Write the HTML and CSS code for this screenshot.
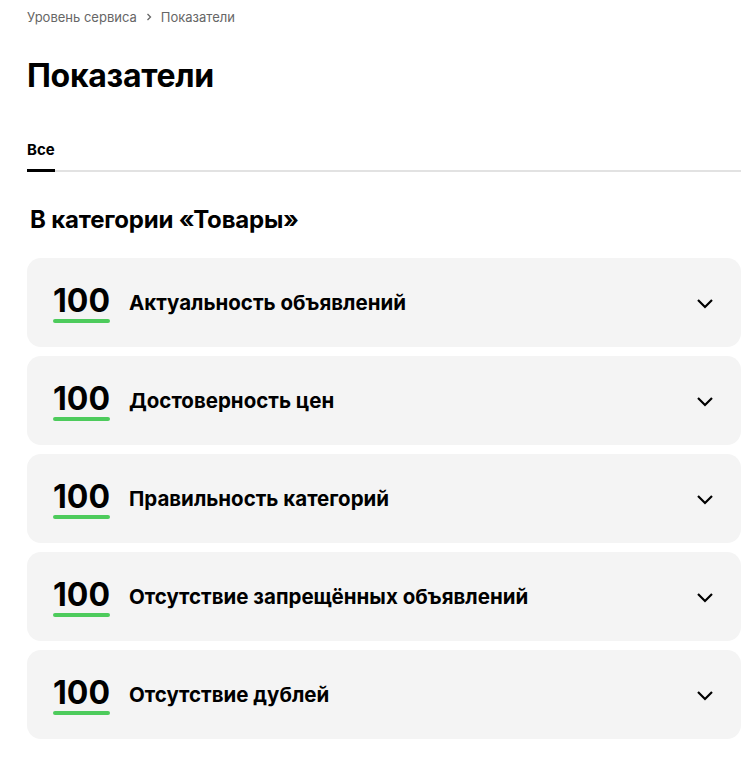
FILE: index.html
```html
<!DOCTYPE html>
<html lang="ru">
<head>
    <meta charset="UTF-8">
    <meta name="viewport" content="width=device-width, initial-scale=1.0">
    <title>Показатели</title>
    <link rel="stylesheet" href="styles.css">
</head>
<body>

<div class="page">
    <nav class="breadcrumbs">
        <a href="#">Уровень сервиса</a>
        <span class="sep">
            <svg width="8" height="8" viewBox="0 0 8 8"><path d="M2.5 1 L5.5 4 L2.5 7" fill="none" stroke="#666" stroke-width="1.3"/></svg>
        </span>
        <a href="#">Показатели</a>
    </nav>

    <h1 class="title">Показатели</h1>

    <div class="tabs">
        <a href="#" class="tab active">Все</a>
    </div>

    <h2 class="section-title">В категории «Товары»</h2>

    <div class="metrics">
        <div class="metric">
            <div class="score">100</div>
            <div class="metric-name">Актуальность объявлений</div>
            <svg class="chevron" width="20" height="20" viewBox="0 0 20 20"><path d="M3 7 L10 14 L17 7" fill="none" stroke="#000" stroke-width="2.2"/></svg>
        </div>
        <div class="metric">
            <div class="score">100</div>
            <div class="metric-name">Достоверность цен</div>
            <svg class="chevron" width="20" height="20" viewBox="0 0 20 20"><path d="M3 7 L10 14 L17 7" fill="none" stroke="#000" stroke-width="2.2"/></svg>
        </div>
        <div class="metric">
            <div class="score">100</div>
            <div class="metric-name">Правильность категорий</div>
            <svg class="chevron" width="20" height="20" viewBox="0 0 20 20"><path d="M3 7 L10 14 L17 7" fill="none" stroke="#000" stroke-width="2.2"/></svg>
        </div>
        <div class="metric">
            <div class="score">100</div>
            <div class="metric-name">Отсутствие запрещённых объявлений</div>
            <svg class="chevron" width="20" height="20" viewBox="0 0 20 20"><path d="M3 7 L10 14 L17 7" fill="none" stroke="#000" stroke-width="2.2"/></svg>
        </div>
        <div class="metric">
            <div class="score">100</div>
            <div class="metric-name">Отсутствие дублей</div>
            <svg class="chevron" width="20" height="20" viewBox="0 0 20 20"><path d="M3 7 L10 14 L17 7" fill="none" stroke="#000" stroke-width="2.2"/></svg>
        </div>
    </div>
</div>

</body>
</html>
```

FILE: styles.css
```css
body {
    margin: 0;
    font-family: Inter, "Noto Sans", sans-serif;
    color: #000;
    background: #fff;
}
.page {
    padding: 8px 10px 20px 27px;
}
.breadcrumbs {
    display: flex;
    align-items: center;
    font-size: 13px;
    height: 18px;
}
.breadcrumbs a {
    color: #666;
    text-decoration: none;
}
.breadcrumbs .sep {
    display: flex;
    margin: 0 8px;
}
.title {
    margin: 30px 0 0;
    font-size: 32px;
    font-weight: 700;
    line-height: 40px;
    letter-spacing: -0.3px;
}
.tabs {
    margin-top: 44px;
    border-bottom: 2px solid #e2e2e2;
    display: flex;
}
.tab {
    color: #000;
    text-decoration: none;
    font-size: 15px;
    font-weight: 700;
    padding-bottom: 10px;
    margin-bottom: -2px;
}
.tab.active {
    border-bottom: 3px solid #000;
}
.section-title {
    margin: 32px 0 22px 3px;
    font-size: 24px;
    font-weight: 700;
    line-height: 32px;
    letter-spacing: -0.2px;
}
.metrics {
    display: flex;
    flex-direction: column;
    gap: 9px;
}
.metric {
    background: #f4f4f4;
    border-radius: 14px;
    height: 89px;
    display: flex;
    align-items: center;
    padding: 0 26px;
}
.score {
    font-size: 32px;
    font-weight: 700;
    line-height: 34px;
    position: relative;
    padding-bottom: 5px;
    margin-top: 2px;
}
.score::after {
    content: "";
    position: absolute;
    left: 0;
    right: 0;
    bottom: 0;
    height: 4px;
    border-radius: 2px;
    background: #4dcb5c;
}
.metric-name {
    font-size: 20.5px;
    font-weight: 700;
    margin-left: 19px;
    flex: 1;
}
```
